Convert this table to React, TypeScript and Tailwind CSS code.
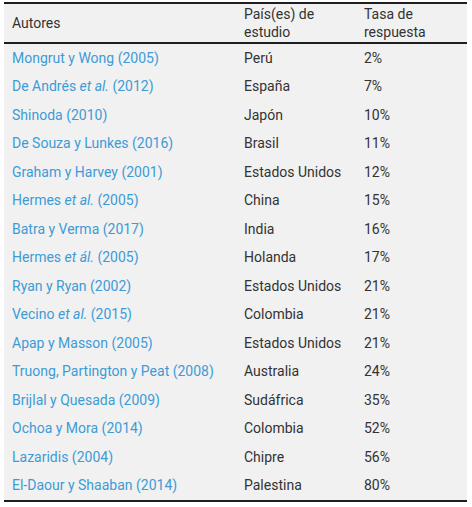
const rows: [React.ReactNode, string, string][] = [
  ["Mongrut y Wong (2005)", "Perú", "2%"],
  [<>De Andrés <i>et al.</i> (2012)</>, "España", "7%"],
  ["Shinoda (2010)", "Japón", "10%"],
  ["De Souza y Lunkes (2016)", "Brasil", "11%"],
  ["Graham y Harvey (2001)", "Estados Unidos", "12%"],
  [<>Hermes <i>et al.</i> (2005)</>, "China", "15%"],
  ["Batra y Verma (2017)", "India", "16%"],
  [<>Hermes <i>et ál.</i> (2005)</>, "Holanda", "17%"],
  ["Ryan y Ryan (2002)", "Estados Unidos", "21%"],
  [<>Vecino <i>et al.</i> (2015)</>, "Colombia", "21%"],
  ["Apap y Masson (2005)", "Estados Unidos", "21%"],
  ["Truong, Partington y Peat (2008)", "Australia", "24%"],
  ["Brijlal y Quesada (2009)", "Sudáfrica", "35%"],
  ["Ochoa y Mora (2014)", "Colombia", "52%"],
  ["Lazaridis (2004)", "Chipre", "56%"],
  ["El-Daour y Shaaban (2014)", "Palestina", "80%"],
];

function App() {
  return (
    <div className="bg-white w-[472px] h-[507px] pt-[2px] pl-[4px] font-['Roboto',sans-serif] text-[14px]">
      <div className="w-[463px] bg-[#f1f1f1] border-t-2 border-b-2 border-[#1e1e1e]">
        <div className="grid grid-cols-[232px_120px_111px] h-[40px] border-b-2 border-[#1e1e1e] text-[#333] leading-[18px] items-center">
          <div className="pl-[8px]">Autores</div>
          <div className="pl-[8px]">País(es) de<br />estudio</div>
          <div className="pl-[8px]">Tasa de<br />respuesta</div>
        </div>
        {rows.map((r, i) => (
          <div key={i} className="grid grid-cols-[232px_120px_111px] h-[28.5px] items-center">
            <div className="pl-[8px] text-[#3d9bd6]">{r[0]}</div>
            <div className="pl-[8px] text-[#333]">{r[1]}</div>
            <div className="pl-[8px] text-[#333]">{r[2]}</div>
          </div>
        ))}
      </div>
    </div>
  );
}

export default App;
